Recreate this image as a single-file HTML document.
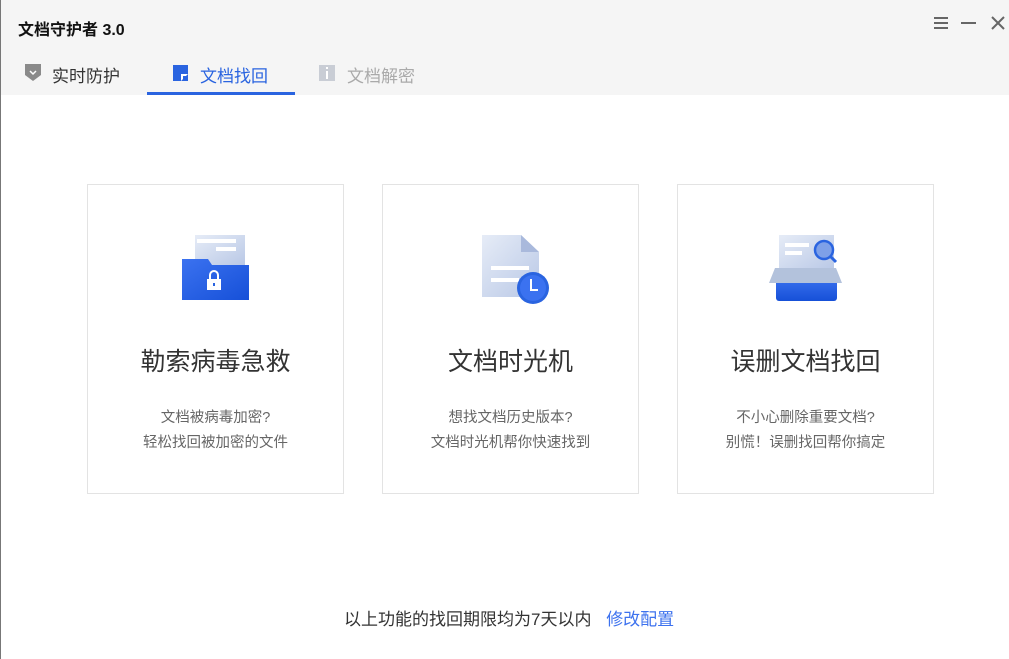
<html><head><style>
body{margin:0;width:1009px;height:659px;background:#fff;font-family:"Liberation Sans","Noto Sans CJK SC",sans-serif;position:relative;overflow:hidden}
.hdr{position:absolute;left:0;top:0;width:1009px;height:95px;background:#f5f5f5}
.lb{position:absolute;left:0;top:0;width:1px;height:659px;background:#777}
.t{position:absolute;white-space:nowrap}
.card{position:absolute;top:184px;width:255px;height:308px;border:1px solid #e3e3e3;background:#fff}
.card .h{position:absolute;top:157px;width:100%;text-align:center;font-size:25px;color:#333}
.card .s{position:absolute;top:221px;width:100%;text-align:center;font-size:14.5px;color:#666;line-height:25px}
.card svg{position:absolute;left:0;top:0}
</style></head><body>
<div class="hdr"></div><div class="lb"></div>
<div class="t" style="left:18px;top:16px;font-size:16px;font-weight:bold;color:#111">文档守护者 3.0</div>
<svg style="position:absolute;left:930px;top:14px" width="75" height="20">
<g stroke="#666" stroke-width="2"><path d="M4 4h14M4 9h14M4 14h14"/><path d="M31 9h15"/><path d="M62 3l12 12M74 3l-12 12"/></g></svg>
<svg style="position:absolute;left:24px;top:63px" width="18" height="20"><path d="M1 1h16v11l-8 6l-8-6z" fill="#8a8a8a"/><path d="M6 8l3 3l3-3" stroke="#fff" stroke-width="1.5" fill="none"/></svg>
<div class="t" style="left:52px;top:62px;font-size:17px;color:#333">实时防护</div>
<svg style="position:absolute;left:172px;top:64px" width="18" height="18"><rect x="1" y="1" width="15" height="16" fill="#2a64e0"/><path d="M9 17v-7h7" fill="#fff"/><rect x="11" y="12" width="3" height="3" fill="#2a64e0"/></svg>
<div class="t" style="left:200px;top:62px;font-size:17px;color:#2a64e0">文档找回</div>
<div style="position:absolute;left:147px;top:92px;width:148px;height:3px;background:#2a64e0"></div>
<svg style="position:absolute;left:318px;top:64px" width="18" height="18"><rect x="1" y="1" width="16" height="16" fill="#c9cdd5"/><rect x="8" y="7" width="2" height="8" fill="#fff"/><rect x="8" y="3" width="2" height="2" fill="#fff"/></svg>
<div class="t" style="left:347px;top:62px;font-size:17px;color:#aaa">文档解密</div>

<div class="card" style="left:87px">
<svg width="255" height="130"><defs><linearGradient id="p" x1="0" y1="0" x2="1" y2="1"><stop offset="0" stop-color="#e6ecf7"/><stop offset="1" stop-color="#b9c8e6"/></linearGradient><linearGradient id="b" x1="0" y1="0" x2="1" y2="1"><stop offset="0" stop-color="#3b72f0"/><stop offset="1" stop-color="#1650d8"/></linearGradient></defs>
<rect x="107" y="50" width="50" height="30" fill="url(#p)"/><rect x="109" y="54" width="39" height="4" fill="#fff"/><rect x="128" y="62" width="20" height="4" fill="#fff"/>
<path d="M94 74h26l4 6h37v35h-67z" fill="url(#b)"/>
<rect x="119" y="94" width="14" height="11" fill="#fff"/><path d="M122 94v-4a4 4 0 0 1 8 0v4" stroke="#fff" stroke-width="2" fill="none"/><rect x="125" y="98" width="2" height="3" fill="#2a64e0"/></svg>
<div class="h">勒索病毒急救</div><div class="s">文档被病毒加密?<br>轻松找回被加密的文件</div></div>

<div class="card" style="left:382px">
<svg width="255" height="130"><defs><linearGradient id="p2" x1="0" y1="0" x2="1" y2="1"><stop offset="0" stop-color="#e6ecf7"/><stop offset="1" stop-color="#b9c8e6"/></linearGradient></defs>
<path d="M99 50h39l18 17v45h-57z" fill="url(#p2)"/><path d="M138 50l18 17h-18z" fill="#a9b9dc"/>
<rect x="108" y="81" width="38" height="4" fill="#fff"/><rect x="108" y="93" width="28" height="4" fill="#fff"/>
<circle cx="150" cy="103" r="16" fill="#2a64e0"/><circle cx="150" cy="103" r="13" fill="#3b72f0"/><path d="M148 94v11h7" stroke="#fff" stroke-width="2" fill="none"/></svg>
<div class="h">文档时光机</div><div class="s">想找文档历史版本?<br>文档时光机帮你快速找到</div></div>

<div class="card" style="left:677px">
<svg width="255" height="130"><defs><linearGradient id="p3" x1="0" y1="0" x2="1" y2="1"><stop offset="0" stop-color="#e6ecf7"/><stop offset="1" stop-color="#b9c8e6"/></linearGradient><linearGradient id="b3" x1="0" y1="0" x2="0" y2="1"><stop offset="0" stop-color="#3b72f0"/><stop offset="1" stop-color="#1650d8"/></linearGradient></defs>
<rect x="101" y="50" width="55" height="35" fill="url(#p3)"/><rect x="107" y="58" width="24" height="4" fill="#fff"/><rect x="107" y="66" width="17" height="4" fill="#fff"/>
<circle cx="146" cy="65" r="9" fill="#7ea0e8" stroke="#2a64e0" stroke-width="2.5"/><path d="M152 71l6 6" stroke="#2a64e0" stroke-width="3"/>
<rect x="98" y="92" width="61" height="24" rx="3" fill="url(#b3)"/>
<path d="M97 83h61l6 15h-73z" fill="#b3c2dc"/></svg>
<div class="h">误删文档找回</div><div class="s">不小心删除重要文档?<br>别慌！误删找回帮你搞定</div></div>

<div class="t" style="left:344px;top:605px;font-size:17px;color:#333">以上功能的找回期限均为7天以内 <span style="color:#3d72ee;margin-left:10px">修改配置</span></div>
</body></html>
